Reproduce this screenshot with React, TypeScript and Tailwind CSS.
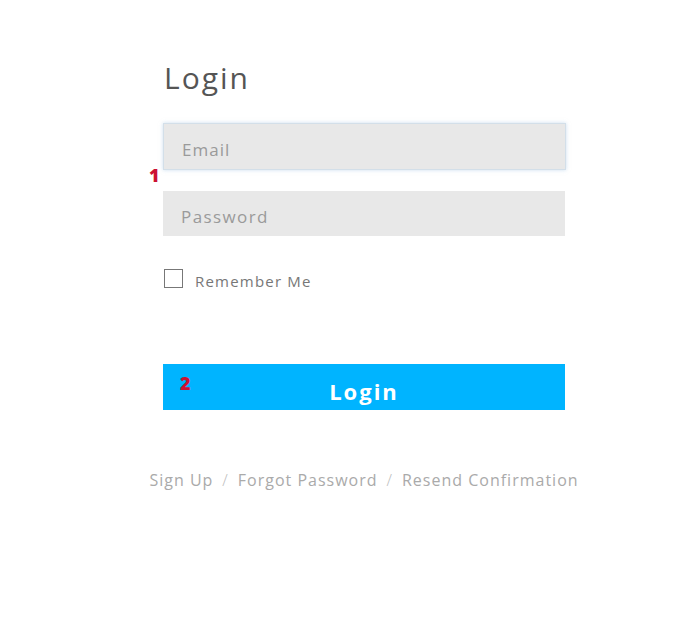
import React, { useState } from "react";

const App: React.FC = () => {
  const [remember, setRemember] = useState(false);

  return (
    <div className="min-h-[637px] w-[700px] bg-white font-['Open_Sans',sans-serif]">
      <div className="relative ml-[163px] w-[402px] pt-[60px]">
        <h1 className="pl-px text-[30px] leading-[36px] font-normal text-[#555] tracking-[2px]">
          Login
        </h1>

        <form className="mt-[27px]" onSubmit={(e) => e.preventDefault()}>
          <input
            type="text"
            placeholder="Email"
            className="block h-[47px] w-[403px] border border-[#d3dfe9] bg-[#e8e8e8] px-[18px] pt-[5px] text-[17px] tracking-[1px] text-[#555] shadow-[0_0_4px_rgba(160,195,225,0.55)] outline-none placeholder:text-[#9a9a9a]"
          />
          <span className="absolute left-[-14px] top-[165px] text-[18px] leading-[20px] font-extrabold text-[#cc1133]">
            1
          </span>
          <input
            type="password"
            placeholder="Password"
            className="mt-[21px] block h-[45px] w-[402px] bg-[#e8e8e8] px-[18px] pt-[5px] text-[17px] tracking-[1.4px] text-[#555] outline-none placeholder:text-[#9a9a9a]"
          />

          <label className="mt-[32px] flex items-center gap-[12px] pl-px">
            <input
              type="checkbox"
              checked={remember}
              onChange={(e) => setRemember(e.target.checked)}
              className="h-[19px] w-[19px] appearance-none border border-[#777] bg-white"
            />
            <span className="relative top-[3px] text-[15px] leading-[20px] text-[#777] tracking-[1.2px]">
              Remember Me
            </span>
          </label>

          <button
            type="submit"
            className="relative mt-[76px] block h-[46px] w-[402px] bg-[#00b4ff] text-[22px] font-bold text-white tracking-[2px]"
          >
            <span className="absolute left-[17px] top-[9px] text-[18px] leading-[20px] font-extrabold text-[#cc1133]">
              2
            </span>
            <span className="relative top-[4px]">Login</span>
          </button>
        </form>

        <div className="mt-[59px] flex justify-center whitespace-nowrap text-[16px] leading-[22px] text-[#aaa] tracking-[1px]">
          <a href="#">Sign Up</a>
          <span className="mx-[9px] font-light text-[#bbb]">/</span>
          <a href="#">Forgot Password</a>
          <span className="mx-[9px] font-light text-[#bbb]">/</span>
          <a href="#">Resend Confirmation</a>
        </div>
      </div>
    </div>
  );
};

export default App;
